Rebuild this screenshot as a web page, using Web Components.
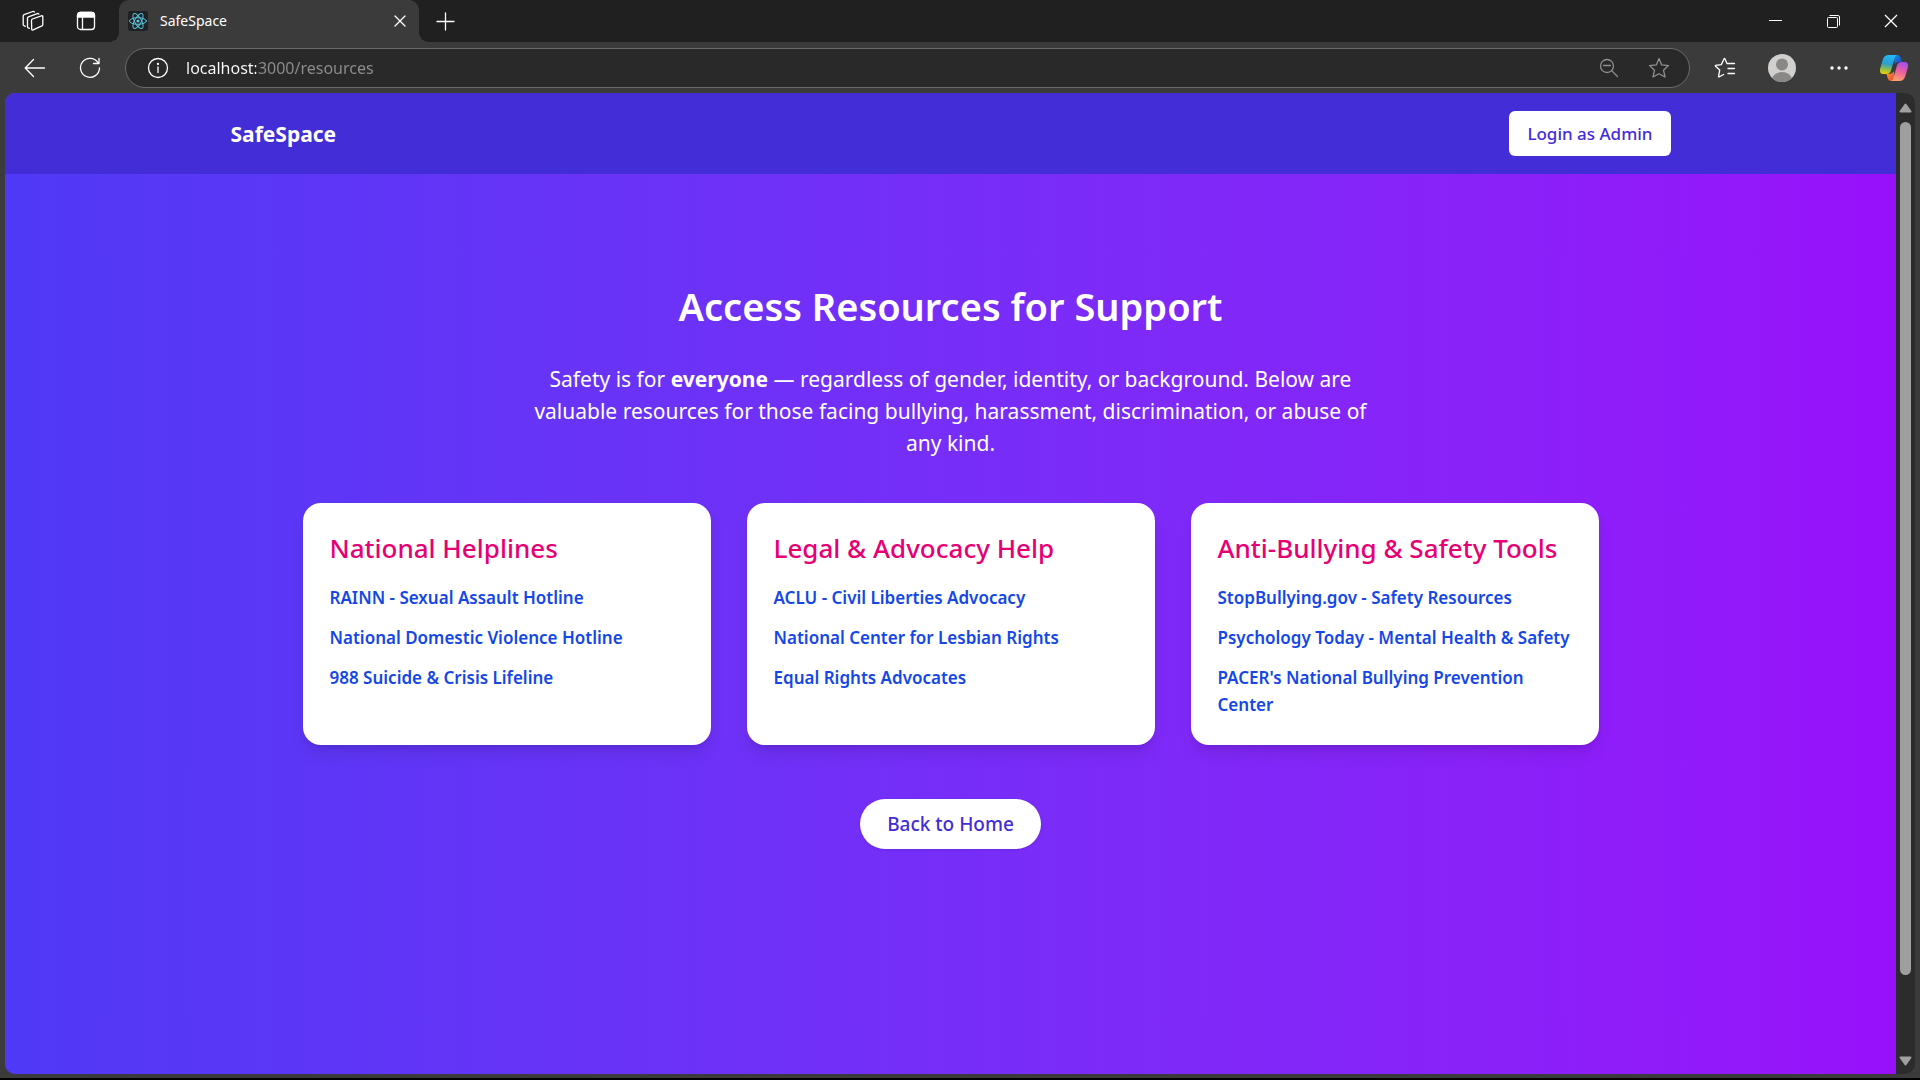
<!DOCTYPE html>
<html lang="en">
<head>
<meta charset="utf-8">
<title>SafeSpace</title>
<style>
  body { margin: 0; background: #000; font-family: "Noto Sans", "Open Sans", sans-serif; }
</style>
</head>
<body>
<browser-window>
  <tab-strip slot="tabs"></tab-strip>
  <tool-bar slot="tools"></tool-bar>
  <site-header></site-header>
  <resources-page>
    <resource-card heading="National Helplines">
      <resource-link href="#rainn">RAINN - Sexual Assault Hotline</resource-link>
      <resource-link href="#ndvh">National Domestic Violence Hotline</resource-link>
      <resource-link href="#988">988 Suicide &amp; Crisis Lifeline</resource-link>
    </resource-card>
    <resource-card heading="Legal &amp; Advocacy Help">
      <resource-link href="#aclu">ACLU - Civil Liberties Advocacy</resource-link>
      <resource-link href="#nclr">National Center for Lesbian Rights</resource-link>
      <resource-link href="#era">Equal Rights Advocates</resource-link>
    </resource-card>
    <resource-card heading="Anti-Bullying &amp; Safety Tools">
      <resource-link href="#stopbullying">StopBullying.gov - Safety Resources</resource-link>
      <resource-link href="#psychology-today">Psychology Today - Mental Health &amp; Safety</resource-link>
      <resource-link href="#pacer">PACER's National Bullying Prevention Center</resource-link>
    </resource-card>
  </resources-page>
</browser-window>

<script>
const define = (name, html, setup) => customElements.define(name, class extends HTMLElement {
  constructor() {
    super();
    const t = document.createElement('template');
    t.innerHTML = '<style>*{box-sizing:border-box}</style>' + html;
    this.attachShadow({ mode: 'open' }).append(t.content.cloneNode(true));
  }
  connectedCallback() { if (setup) setup(this, this.shadowRoot); }
});

define('browser-window', `
  <style>
    :host { display: flex; flex-direction: column; min-height: calc(100vh - 2px); background: #3b3b3b; }
    .view { flex: 1; display: flex; margin: 0 5px 4px; border-radius: 10px; overflow: hidden; }
    main { flex: 1; display: flex; flex-direction: column;
      background: linear-gradient(to right in oklab, #4f39f6, #9810fa); }
  </style>
  <slot name="tabs"></slot>
  <slot name="tools"></slot>
  <div class="view"><main><slot></slot></main><scroll-rail></scroll-rail></div>`);

define('scroll-rail', `
  <style>
    :host { display: flex; flex-direction: column; align-items: center; width: 19px; padding: 10px 0 8px; background: #2c2c2c; }
    svg { display: block; fill: #a0a0a0; stroke: #a0a0a0; stroke-width: 2; stroke-linejoin: round; }
    .track { flex: 1; margin: 9px 0 7px; }
    .thumb { width: 11px; height: 92%; border-radius: 6px; background: #9f9f9f; }
  </style>
  <svg width="13" height="10"><path d="M6.500 1.500L11.500 8.500H1.500Z"/></svg>
  <div class="track"><div class="thumb"></div></div>
  <svg width="13" height="10"><path d="M6.500 8.500L11.500 1.500H1.500Z"/></svg>`);

const iconButton = `
  button { display: flex; align-items: center; justify-content: center; margin: 0; padding: 0; border: 0; background: none; color: inherit; }
  svg { display: block; fill: none; stroke: currentColor; stroke-width: 1.300; stroke-linecap: round; stroke-linejoin: round; }`;

define('tab-strip', `
  <style>${iconButton}
    :host { display: flex; height: 42px; padding-left: 6px; background: #202020; color: #fff; }
    button { width: 53px; height: 42px; }
    .tab { position: relative; display: flex; align-items: center; width: 300px; margin-left: 7px; padding-left: 9px; border-radius: 10px 10px 0 0; background: #3b3b3b; }
    .tab::before, .tab::after { content: ""; position: absolute; bottom: 0; width: 10px; height: 10px; }
    .tab::before { right: 100%; background: radial-gradient(circle at 0 0, transparent 10px, #3b3b3b 10px); }
    .tab::after { left: 100%; background: radial-gradient(circle at 100% 0, transparent 10px, #3b3b3b 10px); }
    .tab span { flex: 1; margin-left: 12px; font-size: 14px; line-height: 20px; }
    .tab button { width: 38px; }
    .controls { display: flex; margin-left: auto; }
    .controls button { width: 58px; }
    .controls svg { stroke-linecap: butt; }
  </style>
  <button aria-label="Workspaces"><svg width="22" height="22" viewBox="0 0 22 22">
    <path d="M9.500 10.400Q9.500 9.400 10.400 9L19.400 5.800Q20.800 5.500 20.800 6.800V14.500Q20.800 15.500 20 15.900L11.200 19.900Q9.700 20.400 9.700 19Z"/>
    <path d="M7.400 18.300L6.300 17.900Q5.500 17.500 5.500 16.500V8.200Q5.500 7.300 6.400 6.900L15.300 3.600Q16.400 3.200 16.800 4.100"/>
    <path d="M3.300 16.300L1.900 15.700Q1.200 15.300 1.200 14.400V6Q1.200 5.100 2.100 4.700L10.700 1.500Q12 1.100 12.400 2"/>
  </svg></button>
  <button aria-label="Tab actions"><svg width="20" height="20" viewBox="0 0 20 20">
    <rect x="1.500" y="1.500" width="17" height="17" rx="3"/><path d="M1.500 6V4.500Q1.500 1.500 4.500 1.500H15.500Q18.500 1.500 18.500 4.500V6Z" fill="currentColor"/><path d="M6.500 6V18.500"/>
  </svg></button>
  <div class="tab">
    <svg width="20" height="20" viewBox="0 0 20 20" style="stroke:#58c4dc;stroke-width:1">
      <rect width="20" height="20" rx="2" fill="#202124" stroke="none"/>
      <ellipse cx="10" cy="10" rx="8.500" ry="3.300"/>
      <ellipse cx="10" cy="10" rx="8.500" ry="3.300" transform="rotate(60 10 10)"/>
      <ellipse cx="10" cy="10" rx="8.500" ry="3.300" transform="rotate(120 10 10)"/>
      <circle cx="10" cy="10" r="1.600" fill="#58c4dc" stroke="none"/>
    </svg>
    <span>SafeSpace</span>
    <button aria-label="Close tab"><svg width="12" height="12" viewBox="0 0 12 12"><path d="M1 1L11 11M11 1L1 11"/></svg></button>
  </div>
  <button aria-label="New tab"><svg width="19" height="19" viewBox="0 0 19 19"><path d="M9.500 1V18M1 9.500H18"/></svg></button>
  <div class="controls">
    <button aria-label="Minimize"><svg width="13" height="13" viewBox="0 0 13 13" style="stroke-width:1"><path d="M0 5.500H13"/></svg></button>
    <button aria-label="Restore"><svg width="14" height="14" viewBox="0 0 14 14" style="stroke-width:1"><rect x="1.500" y="3.500" width="10" height="10" rx="1"/><path d="M3.500 1.500H12Q13.500 1.500 13.500 3V11.500"/></svg></button>
    <button aria-label="Close"><svg width="14" height="14" viewBox="0 0 14 14"><path d="M1 1L13 13M13 1L1 13"/></svg></button>
  </div>`);

define('tool-bar', `
  <style>${iconButton}
    :host { display: flex; align-items: center; height: 51px; padding-left: 7px; color: #fff; }
    button { width: 57px; height: 40px; }
    .nav { width: 55px; }
    .address { flex: 1; display: flex; align-items: center; height: 40px; margin: 0 6px 0 8px; padding: 0 5px 0 10px; border: 1px solid #6b6b6b; border-radius: 20px; background: #292929; }
    .info { width: 43px; }
    input { flex: 1; min-width: 0; margin: 0; padding: 0 0 0 7px; border: 0; outline: 0; font: 16px/24px "Noto Sans", sans-serif; color: #fff;
      background: linear-gradient(to right, #fff 77px, #8e8e8e 77px); -webkit-background-clip: text; background-clip: text; -webkit-text-fill-color: transparent; }
    .dim { width: 50px; color: #8f8f8f; }
    .last { width: 53px; }
  </style>
  <button class="nav" aria-label="Back"><svg width="22" height="20" viewBox="0 0 22 20"><path d="M20.500 10H1.500M9.500 1.500L1.200 10L9.500 18.500"/></svg></button>
  <button class="nav" aria-label="Refresh"><svg width="22" height="22" viewBox="0 0 22 22"><path d="M18.900 5.500A9.500 9.500 0 1 0 20.500 11M20 1.500V6.500H14.500"/></svg></button>
  <div class="address">
    <button class="info" aria-label="Site information"><svg width="22" height="22" viewBox="0 0 22 22"><circle cx="11" cy="11" r="9.500"/><path d="M11 10V15.500"/><circle cx="11" cy="6.900" r=".5" fill="currentColor"/></svg></button>
    <input aria-label="Address" value="localhost:3000/resources" spellcheck="false">
    <button class="dim" aria-label="Zoom"><svg width="20" height="20" viewBox="0 0 20 20"><circle cx="8" cy="8" r="6.500"/><path d="M13 13L18.500 18.500M4.500 7.500H11.500"/></svg></button>
    <button class="dim" aria-label="Add to favorites"><svg width="22" height="22" viewBox="0 0 22 22"><path d="M11 1.600L13.700 7.900L20.500 8.600L15.500 13.200L17 20L11 16.700L5 20L6.500 13.200L1.500 8.600L8.300 7.900Z"/></svg></button>
  </div>
  <button aria-label="Favorites"><svg width="22" height="22" viewBox="0 0 22 22"><path d="M13 6.500L10.900 1.800Q10.500 1.200 10.100 1.800L7.300 7.600L1.700 8.400Q1 8.600 1.500 9.200L5.700 13.100L4.600 19.300Q4.600 20.200 5.400 19.800L9.600 17.500M13 6.500H20.500M14 11.500H20.500M14 16.500H20.500"/></svg></button>
  <button aria-label="Profile"><svg width="28" height="28" viewBox="0 0 28 28" style="stroke:none"><defs><clipPath id="c"><circle cx="14" cy="14" r="14"/></clipPath></defs><g clip-path="url(#c)"><rect width="28" height="28" fill="#d2d0ce"/><circle cx="14" cy="10.500" r="6" fill="#8a8886"/><ellipse cx="14" cy="26" rx="10" ry="8" fill="#8a8886"/></g></svg></button>
  <button aria-label="Settings and more"><svg width="18" height="4" viewBox="0 0 18 4" style="stroke:none;fill:#fff"><circle cx="2" cy="2" r="1.700"/><circle cx="9" cy="2" r="1.700"/><circle cx="16" cy="2" r="1.700"/></svg></button>
  <button class="last" aria-label="Copilot"><svg width="28" height="26" viewBox="0 0 28 26" style="stroke:none">
    <defs>
      <linearGradient id="a" x1=".4" y1="0" x2=".25" y2="1"><stop offset="0" stop-color="#22b8f5"/><stop offset=".45" stop-color="#2b9fd0"/><stop offset=".75" stop-color="#8fc04a"/><stop offset="1" stop-color="#f5d000"/></linearGradient>
      <linearGradient id="b" x1=".7" y1="0" x2=".4" y2="1"><stop offset="0" stop-color="#a44df0"/><stop offset=".5" stop-color="#ee5f9c"/><stop offset="1" stop-color="#ffa070"/></linearGradient>
      <linearGradient id="d" x1="0" y1="0" x2="1" y2="1"><stop offset="0" stop-color="#1b8de8"/><stop offset="1" stop-color="#1642b8"/></linearGradient>
      <linearGradient id="e" x1="0" y1="0" x2="1" y2="1"><stop offset="0" stop-color="#ffa02a"/><stop offset="1" stop-color="#e8452f"/></linearGradient>
    </defs>
    <path d="M14 0H17.500Q20 0 20.800 2.800L22 7H19Q16 7 14.500 9Z" fill="url(#d)"/>
    <path d="M14 26H11Q8.500 26 7.800 23.500L6.500 19H9.500Q12 19 14 16Z" fill="url(#e)"/>
    <path d="M8.500 0H17.500Q15.500 0 14.500 3.500L11 15.500Q10 19 6.500 19H3Q-1 18.500 .3 13L3 4Q4.500 0 8.500 0Z" fill="url(#a)"/>
    <path d="M19.500 26H10.500Q12.500 26 13.500 22.500L17 10.500Q18 7 21.500 7H25Q29 7.500 27.700 13L25 22Q23.500 26 19.500 26Z" fill="url(#b)"/>
  </svg></button>`);

define('site-header', `
  <style>
    :host { display: block; background: #432dd7; }
    nav { display: flex; align-items: center; justify-content: space-between; max-width: 1440px; margin: 0 auto; padding: 18px 0; }
    a { color: #fff; font-size: 21px; line-height: 32px; font-weight: 700; text-decoration: none; }
    button { height: 45px; margin: 0; padding: 0 18px; border: 0; border-radius: 6px; background: #fff; color: #432dd7; font: 500 17px/27px "Noto Sans", sans-serif; }
  </style>
  <nav><a href="#home">SafeSpace</a><button>Login as Admin</button></nav>`);

define('resources-page', `
  <style>
    :host { display: flex; flex-direction: column; align-items: center; padding: 110px 27px; color: #fff; text-align: center; }
    h1 { margin: 0 0 34px; font-size: 38px; line-height: 45px; font-weight: 600; }
    p { max-width: 864px; margin: 0 0 44px; font-size: 21px; line-height: 32px; }
    .cards { display: grid; grid-template-columns: repeat(3, 1fr); gap: 36px; width: 100%; max-width: 1296px; margin-bottom: 54px; text-align: left; }
    button { height: 50px; margin: 0; padding: 0 27px; border: 0; border-radius: 25px; background: #fff; color: #432dd7; font: 500 19px/32px "Noto Sans", sans-serif; box-shadow: 0 1px 3px rgb(0 0 0 / .1); }
  </style>
  <h1>Access Resources for Support</h1>
  <p>Safety is for <strong>everyone</strong> — regardless of gender, identity, or background. Below are valuable resources for those facing bullying, harassment, discrimination, or abuse of any kind.</p>
  <div class="cards"><slot></slot></div>
  <button>Back to Home</button>`);

define('resource-card', `
  <style>
    :host { display: block; padding: 27px; border-radius: 18px; background: #fff; box-sizing: border-box; box-shadow: 0 11px 17px -3px rgb(0 0 0 / .1), 0 5px 7px -4px rgb(0 0 0 / .1); }
    h2 { margin: 0 0 18px; color: #e60076; font-size: 26px; line-height: 36px; font-weight: 500; }
    div { display: flex; flex-direction: column; gap: 13px; }
  </style>
  <h2></h2><div role="list"><slot></slot></div>`,
  (el, root) => { root.querySelector('h2').textContent = el.getAttribute('heading'); });

define('resource-link', `
  <style>
    :host { display: block; font-size: 17px; line-height: 27px; font-weight: 600; }
    a { color: #1447e6; text-decoration: none; }
  </style>
  <a><slot></slot></a>`,
  (el, root) => { el.setAttribute('role', 'listitem'); root.querySelector('a').href = el.getAttribute('href'); });
</script>
</body>
</html>
